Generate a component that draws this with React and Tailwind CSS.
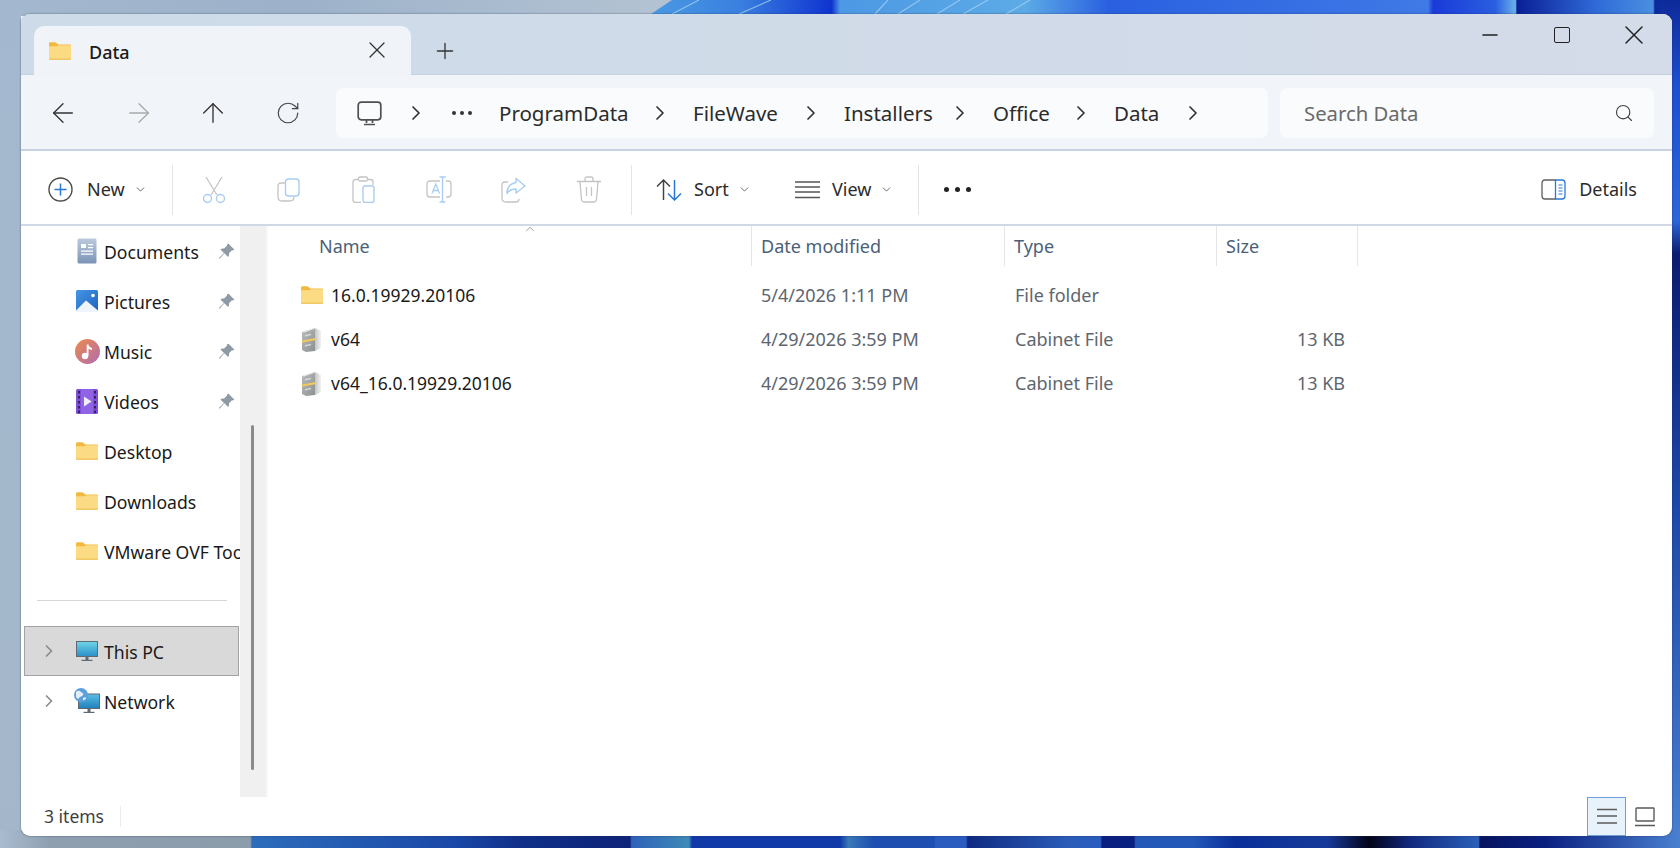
import React from 'react';
import { ArrowLeft, ArrowRight, ArrowUp, RotateCw, ChevronRight, ChevronDown, ChevronUp, Search, X, Plus, Minus } from 'lucide-react';

function Wallpaper() {
  return (
    <svg className="absolute inset-0" width="1680" height="848" viewBox="0 0 1680 848">
      <defs>
        <linearGradient id="wpTop" gradientUnits="userSpaceOnUse" x1="0" y1="0" x2="1680" y2="0">
          <stop offset="0" stopColor="#a3b8ce" />
          <stop offset="0.18" stopColor="#9db2ca" />
          <stop offset="0.385" stopColor="#b2c2d2" />
          <stop offset="0.386" stopColor="#4a9ae2" />
          <stop offset="0.44" stopColor="#3a80e0" />
          <stop offset="0.495" stopColor="#0f33d0" />
          <stop offset="0.5" stopColor="#4d98e4" />
          <stop offset="0.61" stopColor="#5cabe6" />
          <stop offset="0.66" stopColor="#2a60e0" />
          <stop offset="0.85" stopColor="#3f7ae6" />
          <stop offset="0.853" stopColor="#1a3ad8" />
          <stop offset="0.89" stopColor="#2a5ee0" />
          <stop offset="0.902" stopColor="#6ab0ea" />
          <stop offset="0.903" stopColor="#0a1f95" />
          <stop offset="0.95" stopColor="#2f6ad8" />
          <stop offset="0.984" stopColor="#4a8fe0" />
          <stop offset="0.985" stopColor="#0d2a9c" />
          <stop offset="1" stopColor="#0f2f9e" />
        </linearGradient>
        <linearGradient id="wpBottom" gradientUnits="userSpaceOnUse" x1="0" y1="0" x2="1680" y2="0">
          <stop offset="0" stopColor="#a9bccf" />
          <stop offset="0.03" stopColor="#8e9fb0" />
          <stop offset="0.149" stopColor="#8b9cab" />
          <stop offset="0.15" stopColor="#2d6cbb" />
          <stop offset="0.27" stopColor="#1a48a8" />
          <stop offset="0.31" stopColor="#0f2f88" />
          <stop offset="0.375" stopColor="#0e2378" />
          <stop offset="0.376" stopColor="#2e62b8" />
          <stop offset="0.41" stopColor="#3f8ab8" />
          <stop offset="0.412" stopColor="#103aa8" />
          <stop offset="0.5" stopColor="#0f3aa8" />
          <stop offset="0.505" stopColor="#3a78b8" />
          <stop offset="0.52" stopColor="#1e4fb0" />
          <stop offset="0.556" stopColor="#1e4fb0" />
          <stop offset="0.557" stopColor="#2a5cc0" />
          <stop offset="0.575" stopColor="#2a5cc0" />
          <stop offset="0.576" stopColor="#0f2a80" />
          <stop offset="0.635" stopColor="#2a5cb8" />
          <stop offset="0.655" stopColor="#2a5cc0" />
          <stop offset="0.656" stopColor="#0a2080" />
          <stop offset="0.675" stopColor="#0a2080" />
          <stop offset="0.676" stopColor="#2458b8" />
          <stop offset="0.71" stopColor="#2458b8" />
          <stop offset="0.735" stopColor="#0a2f99" />
          <stop offset="0.79" stopColor="#163a9a" />
          <stop offset="0.815" stopColor="#020418" />
          <stop offset="0.84" stopColor="#122a80" />
          <stop offset="0.88" stopColor="#2a60b8" />
          <stop offset="0.881" stopColor="#06135f" />
          <stop offset="0.92" stopColor="#0a2080" />
          <stop offset="1" stopColor="#4a80d0" />
        </linearGradient>
        <linearGradient id="wpRight" x1="0" y1="0" x2="0" y2="1">
          <stop offset="0" stopColor="#0e2a9a" />
          <stop offset="0.1" stopColor="#1d4fd0" />
          <stop offset="0.26" stopColor="#2d66d8" />
          <stop offset="0.3" stopColor="#0a1c70" />
          <stop offset="0.6" stopColor="#1d48a8" />
          <stop offset="1" stopColor="#4a80d0" />
        </linearGradient>
        <linearGradient id="wpLeft" x1="0" y1="0" x2="0" y2="1">
          <stop offset="0" stopColor="#a3b8ce" />
          <stop offset="1" stopColor="#a4b7ca" />
        </linearGradient>
      </defs>
      <rect x="0" y="0" width="1680" height="16" fill="url(#wpTop)" />
      <path d="M640 0h32l-24 16h-8z" fill="#b2c2d2" />
      <rect x="0" y="0" width="21" height="848" fill="url(#wpLeft)" />
      <rect x="1660" y="0" width="20" height="848" fill="url(#wpRight)" />
      <rect x="0" y="830" width="1680" height="18" fill="url(#wpBottom)" />
      <path d="M672 14L699 0M739 14L771 0M875 14L888 0M898 14L920 0M937 14L960 0M963 14L988 0M1006 14L1030 0" stroke="#9fd0f0" strokeWidth="1.2" opacity="0.8" />
    </svg>
  );
}

function FolderIcon({ className = 'w-[22px] h-[18px]' }) {
  return (
    <svg className={className} viewBox="0 0 24 19">
      <path d="M0 1.500C0 .7.6 0 1.400 0h5.200c.6 0 1 .2 1.400.6L10 2.500h12.600c.8 0 1.400.6 1.400 1.400V6H0z" fill="#f1b93f" />
      <path d="M0 4.400h9.600l1.700-1.300h11.400c.7 0 1.300.6 1.300 1.300v13.200c0 .8-.6 1.400-1.400 1.400H1.400C.6 19 0 18.400 0 17.600z" fill="#fbdc84" />
      <rect x="0" y="17.800" width="24" height="1.200" rx="0.600" fill="#f0c156" />
    </svg>
  );
}

function CabinetIcon() {
  return (
    <svg className="w-[24px] h-[25px]" viewBox="0 0 24 25">
      <defs>
        <linearGradient id="cabFront" x1="0" y1="0" x2="1" y2="1">
          <stop offset="0" stopColor="#b9bcbc" />
          <stop offset="1" stopColor="#8d9191" />
        </linearGradient>
        <linearGradient id="cabShadow" x1="0" y1="0" x2="1" y2="0">
          <stop offset="0" stopColor="#c4c6c6" />
          <stop offset="1" stopColor="#f2f2f2" />
        </linearGradient>
      </defs>
      <path d="M14 1l6 3v17l-6 3z" fill="url(#cabShadow)" />
      <path d="M1 5L14 1v23L5 25l-4-2z" fill="url(#cabFront)" />
      <path d="M1 5L14 1l.6.4L3 5.600z" fill="#ececec" />
      <path d="M1 13.500l13-2.500v2.200L1 15.700z" fill="#eec75e" />
      <path d="M4 8l6-1.300v1.600L4 9.600zM4 18l6-1.300v1.600L4 19.600z" fill="#d6d8d8" />
    </svg>
  );
}

function PinIcon() {
  return (
    <svg className="w-[17px] h-[17px]" viewBox="0 0 17 17">
      <path d="M10.500.700l5.800 5.800-1.200 1.100-1.100-.3-3 3c.3 1.400 0 2.700-.9 3.700L6.400 10.300 1.600 15.800.900 15.100 6 10.100 2.400 6.400c1-.9 2.400-1.200 3.700-.8l3-3-.2-1.100z" fill="#8e9ba6" />
    </svg>
  );
}

function DocumentsIcon() {
  return (
    <svg className="w-[20px] h-[26px]" viewBox="0 0 20 26">
      <defs>
        <linearGradient id="docGrad" x1="0" y1="0" x2="0" y2="1">
          <stop offset="0" stopColor="#bccade" />
          <stop offset="1" stopColor="#7c93b7" />
        </linearGradient>
      </defs>
      <rect x="0.500" y="0.500" width="19" height="25" rx="1.500" fill="url(#docGrad)" />
      <path d="M4 6h5v4H4zM11 6h5v1.300h-5zM11 9h5v1.300h-5zM4 12.500h12v1.300H4zM4 15.500h12v1.300H4z" fill="#fff" />
    </svg>
  );
}

function PicturesIcon() {
  return (
    <svg className="w-[22px] h-[22px]" viewBox="0 0 22 22">
      <defs>
        <linearGradient id="picGrad" x1="0" y1="0" x2="1" y2="1">
          <stop offset="0" stopColor="#4596e6" />
          <stop offset="1" stopColor="#1e62bd" />
        </linearGradient>
      </defs>
      <rect width="22" height="22" rx="1.500" fill="url(#picGrad)" />
      <circle cx="17" cy="5.500" r="1.800" fill="#fff" />
      <path d="M0 20.500L10 10.500l12 10v1.500H0z" fill="#eef5fc" />
    </svg>
  );
}

function MusicIcon() {
  return (
    <svg className="w-[25px] h-[25px]" viewBox="0 0 25 25">
      <defs>
        <linearGradient id="musGrad" x1="0" y1="0" x2="1" y2="1">
          <stop offset="0" stopColor="#ee8a4a" />
          <stop offset="1" stopColor="#b06cb2" />
        </linearGradient>
      </defs>
      <circle cx="12.500" cy="12.500" r="12.500" fill="url(#musGrad)" />
      <circle cx="10" cy="17" r="3.200" fill="#fff" />
      <path d="M11.700 17V5.500h1.800c.2 2.200 1.900 3 3.500 3.500v2c-1.400-.2-2.600-.8-3.500-1.500V17z" fill="#fff" />
    </svg>
  );
}

function VideosIcon() {
  return (
    <svg className="w-[22px] h-[25px]" viewBox="0 0 22 25">
      <rect width="22" height="25" rx="1.500" fill="#7f4fd8" />
      <rect x="5" y="0" width="12" height="25" fill="#8f62e6" />
      <path d="M2 2h2v2.500H2zM2 7h2v2.500H2zM2 12h2v2.500H2zM2 17h2v2.500H2zM2 21.500h2V24H2zM18 2h2v2.500h-2zM18 7h2v2.500h-2zM18 12h2v2.500h-2zM18 17h2v2.500h-2zM18 21.500h2V24h-2z" fill="#35215f" />
      <path d="M8 7.500l7.500 5-7.500 5z" fill="#f2eefc" />
    </svg>
  );
}

function ThisPcIcon() {
  return (
    <svg className="w-[22px] h-[21px]" viewBox="0 0 22 21">
      <defs>
        <linearGradient id="pcGrad" x1="0" y1="0" x2="0" y2="1">
          <stop offset="0" stopColor="#6fd6ea" />
          <stop offset="1" stopColor="#2a8fc6" />
        </linearGradient>
      </defs>
      <rect x="0.500" y="0.500" width="21" height="15" fill="url(#pcGrad)" stroke="#5f6b74" />
      <path d="M9.500 15.500h3V19h-3z" fill="#5f6b74" />
      <path d="M5.500 18.800h11v1.200h-11z" fill="#5f6b74" />
    </svg>
  );
}

function NetworkIcon() {
  return (
    <svg className="w-[26px] h-[26px]" viewBox="0 0 26 26">
      <defs>
        <linearGradient id="netGrad" x1="0" y1="0" x2="0" y2="1">
          <stop offset="0" stopColor="#5cbfe4" />
          <stop offset="1" stopColor="#1f7fbb" />
        </linearGradient>
      </defs>
      <rect x="4.500" y="6" width="21" height="14.500" fill="url(#netGrad)" stroke="#5f6b74" />
      <path d="M13.500 20.500h3V24h-3z" fill="#5f6b74" />
      <path d="M9.500 23.800h11V25h-11z" fill="#5f6b74" />
      <circle cx="7" cy="7" r="7" fill="#5c9fdc" />
      <path d="M2 4c2-2 4-1 5 0s3 1 2 3-3 1-4 3-3 0-3-2zM9 10c1-1 3-1 3 0s-2 3-3 2z" fill="#e4eef8" />
    </svg>
  );
}

function MonitorIcon() {
  return (
    <svg className="w-[25px] h-[25px]" viewBox="0 0 25 25" fill="none" stroke="#4b5055" strokeWidth="1.700">
      <rect x="1.200" y="1.200" width="22.600" height="17.600" rx="3" />
      <path d="M9.500 19v3M15.500 19v3M7 23.500h11" />
    </svg>
  );
}

function NewIcon() {
  return (
    <svg className="w-[25px] h-[25px]" viewBox="0 0 25 25" fill="none">
      <circle cx="12.500" cy="12.500" r="11.500" stroke="#4a4a4a" strokeWidth="1.400" />
      <path d="M12.500 6.500v12M6.500 12.500h12" stroke="#2a78d6" strokeWidth="1.500" />
    </svg>
  );
}

function CutIcon() {
  return (
    <svg className="w-[24px] h-[28px]" viewBox="0 0 24 28" fill="none">
      <path d="M4 1l11 18M20 1L9 19" stroke="#c4c4c4" strokeWidth="1.300" />
      <circle cx="5.500" cy="22.500" r="4" stroke="#a9cdf0" strokeWidth="1.400" />
      <circle cx="18.500" cy="22.500" r="4" stroke="#a9cdf0" strokeWidth="1.400" />
    </svg>
  );
}

function CopyIcon() {
  return (
    <svg className="w-[23px] h-[24px]" viewBox="0 0 23 24" fill="none">
      <path d="M8 5H4C2 5 1 6 1 8v11c0 2 1 4 4 4h8c2 0 4-1 4-4" stroke="#c4c4c4" strokeWidth="1.300" />
      <rect x="8.500" y="1" width="13.500" height="17" rx="3" stroke="#a9cdf0" strokeWidth="1.400" />
    </svg>
  );
}

function PasteIcon() {
  return (
    <svg className="w-[23px] h-[27px]" viewBox="0 0 23 27" fill="none">
      <path d="M6 3.500H3.500C2 3.500 1 4.500 1 6v18c0 1.500 1 2.500 2.500 2.500H9M16 3.500h2.500C20 3.500 21 4.500 21 6v3" stroke="#c4c4c4" strokeWidth="1.300" />
      <rect x="6.500" y="1" width="9" height="4" rx="1.500" stroke="#c4c4c4" strokeWidth="1.300" />
      <rect x="11" y="10" width="11" height="16.500" rx="2" stroke="#a9cdf0" strokeWidth="1.400" />
    </svg>
  );
}

function RenameIcon() {
  return (
    <svg className="w-[26px] h-[27px]" viewBox="0 0 26 27" fill="none">
      <path d="M14 5H4C2 5 1 6 1 8v10c0 2 1 3 3 3h10M20 5h2c2 0 3 1 3 3v10c0 2-1 3-3 3h-2" stroke="#c4c4c4" strokeWidth="1.300" />
      <path d="M13.500 1h6M16.500 1v25M13.500 26h6" stroke="#a9cdf0" strokeWidth="1.400" />
      <path d="M6 17.500l3.800-9.500 3.700 9.500M7.300 14.500h5" stroke="#a9cdf0" strokeWidth="1.300" />
    </svg>
  );
}

function ShareIcon() {
  return (
    <svg className="w-[25px] h-[26px]" viewBox="0 0 25 26" fill="none">
      <path d="M7 5H4C2 5 1 6 1 8v13c0 2 1 4 4 4h10c2 0 3-1 3-3" stroke="#c4c4c4" strokeWidth="1.300" />
      <path d="M15 1.500l9 7.500-9 7v-4c-4 0-7 1-9 4.500 0-6 3-10 9-11z" stroke="#a9cdf0" strokeWidth="1.400" strokeLinejoin="round" />
    </svg>
  );
}

function DeleteIcon() {
  return (
    <svg className="w-[24px] h-[27px]" viewBox="0 0 24 27" fill="none" stroke="#c4c4c4" strokeWidth="1.300">
      <path d="M0 5.500h24M8 5V3c0-1 1-2 2-2h4c1 0 2 1 2 2v2M3 6l1.500 17.500c.2 1.500 1 2.500 2.500 2.500h10c1.500 0 2.300-1 2.500-2.500L21 6M9.500 11v9M14.500 11v9" />
    </svg>
  );
}

function SortIcon() {
  return (
    <svg className="w-[26px] h-[22px]" viewBox="0 0 26 22" fill="none" strokeWidth="1.500">
      <path d="M1 7.500L7.500 1 14 7.500M7.500 1v20" stroke="#444" />
      <path d="M12 14.500l6.500 6.500 6.500-6.500M18.500 1v20" stroke="#2a78d6" />
    </svg>
  );
}

function LinesIcon() {
  return (
    <svg className="w-[25px] h-[18px]" viewBox="0 0 25 18" fill="none" stroke="#555" strokeWidth="1.300">
      <path d="M0 1h25M0 6h25M0 11h25M0 16.500h25" />
    </svg>
  );
}

function DetailsIcon() {
  return (
    <svg className="w-[25px] h-[21px]" viewBox="0 0 25 21" fill="none">
      <path d="M14.500 1H4C2 1 1 2 1 4v13c0 2 1 3 3 3h10.500" stroke="#5f5f5f" strokeWidth="1.300" />
      <path d="M14.500 1H21c2 0 3 1 3 3v13c0 2-1 3-3 3h-6.500z" stroke="#2a78d6" strokeWidth="1.300" />
      <path d="M17.500 6h4M17.500 9h4M17.500 12h4M17.500 15h4" stroke="#2a78d6" strokeWidth="1.100" />
    </svg>
  );
}

function Crumb({ label, className }) {
  return (
    <div className={`flex items-center h-full ${className}`}>
      <span className="flex-1 text-[#2b2b2b] text-[20.500px]">{label}</span>
      <ChevronRight className="w-[24px] h-[24px] text-[#333]" strokeWidth={1.7} />
    </div>
  );
}

function ToolButton({ children }) {
  return <div className="w-[75px] h-full flex items-center justify-center">{children}</div>;
}

function NavItem({ icon, label, pinned }) {
  return (
    <div className="h-[50px] flex items-center shrink-0 relative whitespace-nowrap">
      <div className="w-[83px] flex justify-end pr-[4px] shrink-0">
        <div className="w-[26px] flex justify-center">{icon}</div>
      </div>
      <span className="pt-[2px] text-[#1a1a1a] text-[17.600px]">{label}</span>
      {pinned && (
        <div className="absolute left-[197px] top-[17px]">
          <PinIcon />
        </div>
      )}
    </div>
  );
}

function FileRow({ icon, name, date, type, size }) {
  return (
    <div className="h-[44px] flex items-center text-[18px]">
      <div className="w-[484px] flex items-center pl-[33px]">
        <div className="w-[30px] shrink-0">{icon}</div>
        <span className="text-[#1a1a1a] text-[17.500px]">{name}</span>
      </div>
      <div className="w-[253px] pl-[9px] text-[#5d6670]">{date}</div>
      <div className="w-[212px] pl-[10px] text-[#5d6670]">{type}</div>
      <div className="w-[141px] pr-[13px] text-right text-[#5d6670]">{size}</div>
    </div>
  );
}

export default function App() {
  return (
    <div className="relative w-[1680px] h-[848px] overflow-hidden pt-[14px] pl-[21px] pr-[8px] pb-[12px] font-['Noto_Sans',sans-serif]">
      <Wallpaper />
      {/* Window */}
      <div className="relative w-full h-full flex flex-col rounded-[9px] overflow-hidden bg-white shadow-[0_0_2px_rgba(40,50,70,0.7)]">
        {/* Title bar */}
        <div className="h-[61px] shrink-0 flex pt-[12px] pl-[13px] bg-gradient-to-r from-[#cddbe8] to-[#d4dbe9] border-b border-[#c5d1df] relative">
          <div className="w-[377px] h-[49px] bg-[#f0f4f9] rounded-t-[10px] flex items-center pl-[15px] pr-[20px]">
            <FolderIcon />
            <span className="ml-[18px] mt-[3px] text-[#1b1b1b] text-[18px] font-medium">Data</span>
            <X className="ml-auto -mt-[1px] w-[28px] h-[28px] text-[#333]" strokeWidth={1.1} />
          </div>
          <Plus className="ml-[21px] mt-[12px] w-[26px] h-[26px] text-[#333]" strokeWidth={1.2} />
          {/* Window controls */}
          <div className="ml-auto flex items-start pr-[22px] -mt-[1px]">
            <Minus className="-mt-[2px] w-[24px] h-[24px] text-[#222]" strokeWidth={1.6} />
            <div className="ml-[52px] mt-[2px] w-[16px] h-[16px] border-[1.500px] border-[#222] rounded-[2px]" />
            <X className="ml-[48px] -mt-[6px] w-[32px] h-[32px] text-[#222]" strokeWidth={1.1} />
          </div>
        </div>

        {/* Address row */}
        <div className="h-[76px] shrink-0 flex items-center pt-[2px] bg-[#f1f4f9] border-b-2 border-[#c6d2e2]">
          <div className="w-[315px] shrink-0 flex items-center pl-[4px]">
            <div className="w-[76px] flex justify-center"><ArrowLeft className="w-[32px] h-[32px] text-[#333]" strokeWidth={1} /></div>
            <div className="w-[75px] flex justify-center"><ArrowRight className="w-[32px] h-[32px] text-[#a9a9a9]" strokeWidth={1} /></div>
            <div className="w-[74px] flex justify-center"><ArrowUp className="w-[32px] h-[32px] text-[#333]" strokeWidth={1} /></div>
            <div className="w-[76px] flex justify-center"><RotateCw className="w-[26px] h-[26px] text-[#444]" strokeWidth={1.1} /></div>
          </div>
          <div className="w-[932px] h-[50px] shrink-0 bg-[#fafbfd] rounded-[7px] flex items-center pl-[21px]">
            <MonitorIcon />
            <ChevronRight className="ml-[22px] w-[24px] h-[24px] text-[#333]" strokeWidth={1.7} />
            <div className="ml-[24px] w-[47px] flex gap-[4px]">
              <div className="w-[4px] h-[4px] rounded-full bg-[#333]" />
              <div className="w-[4px] h-[4px] rounded-full bg-[#333]" />
              <div className="w-[4px] h-[4px] rounded-full bg-[#333]" />
            </div>
            <Crumb label="ProgramData" className="w-[194px] pr-[21px]" />
            <Crumb label="FileWave" className="w-[151px] pr-[21px]" />
            <Crumb label="Installers" className="w-[149px] pr-[21px]" />
            <Crumb label="Office" className="w-[121px] pr-[21px]" />
            <Crumb label="Data" className="w-[91px]" />
          </div>
          <div className="ml-[12px] w-[374px] h-[50px] bg-[#fafbfd] rounded-[7px] flex items-center pl-[24px] pr-[20px]">
            <span className="text-[#6a6a6a] text-[20.300px]">Search Data</span>
            <Search className="ml-auto w-[20px] h-[20px] text-[#444]" strokeWidth={1.4} />
          </div>
        </div>

        {/* Command bar */}
        <div className="h-[75px] shrink-0 flex items-center pt-[4px] border-b-2 border-[#cfd8e4] text-[18px] text-[#2b2b2b]">
          <div className="w-[151px] shrink-0 h-full flex items-center pl-[27px]">
            <NewIcon />
            <span className="ml-[14px]">New</span>
            <ChevronDown className="ml-[9px] w-[13px] h-[13px] text-[#555]" strokeWidth={1.6} />
          </div>
          <div className="w-px h-[50px] bg-[#e4e4e4] shrink-0" />
          <div className="shrink-0 h-full flex items-center pl-[3px]">
            <ToolButton><CutIcon /></ToolButton>
            <ToolButton><CopyIcon /></ToolButton>
            <ToolButton><PasteIcon /></ToolButton>
            <ToolButton><RenameIcon /></ToolButton>
            <ToolButton><ShareIcon /></ToolButton>
            <ToolButton><DeleteIcon /></ToolButton>
          </div>
          <div className="w-px h-[50px] bg-[#e4e4e4] shrink-0 ml-[5px]" />
          <div className="w-[123px] shrink-0 h-full flex items-center pl-[24px]">
            <SortIcon />
            <span className="ml-[12px]">Sort</span>
            <ChevronDown className="ml-[9px] w-[13px] h-[13px] text-[#555]" strokeWidth={1.6} />
          </div>
          <div className="w-[163px] shrink-0 h-full flex items-center pl-[40px]">
            <LinesIcon />
            <span className="ml-[12px]">View</span>
            <ChevronDown className="ml-[9px] w-[13px] h-[13px] text-[#555]" strokeWidth={1.6} />
          </div>
          <div className="w-px h-[50px] bg-[#e4e4e4] shrink-0" />
          <div className="ml-[25px] flex gap-[6px]">
            <div className="w-[5px] h-[5px] rounded-full bg-[#222]" />
            <div className="w-[5px] h-[5px] rounded-full bg-[#222]" />
            <div className="w-[5px] h-[5px] rounded-full bg-[#222]" />
          </div>
          <div className="ml-auto flex items-center pr-[35px]">
            <DetailsIcon />
            <span className="ml-[13px]">Details</span>
          </div>
        </div>

        {/* Body */}
        <div className="flex-1 flex min-h-0">
          {/* Navigation pane */}
          <div className="w-[219px] shrink-0 overflow-hidden flex flex-col">
            <div className="flex flex-col">
              <NavItem icon={<DocumentsIcon />} label="Documents" pinned />
              <NavItem icon={<PicturesIcon />} label="Pictures" pinned />
              <NavItem icon={<MusicIcon />} label="Music" pinned />
              <NavItem icon={<VideosIcon />} label="Videos" pinned />
              <NavItem icon={<FolderIcon />} label="Desktop" />
              <NavItem icon={<FolderIcon />} label="Downloads" />
              <NavItem icon={<FolderIcon />} label="VMware OVF Tools" />
            </div>
            <div className="mt-[24px] ml-[16px] w-[190px] h-px bg-[#d6d6d6] shrink-0" />
            <div className="mt-[25px] ml-[3px] w-[215px] h-[50px] shrink-0 bg-[#d9d9d9] border border-[#a3a3a3] flex items-center whitespace-nowrap">
              <ChevronRight className="ml-[14px] w-[20px] h-[20px] text-[#8a8a8a]" strokeWidth={2} />
              <div className="ml-[15px] w-[26px] flex justify-center"><ThisPcIcon /></div>
              <span className="ml-[4px] pt-[2px] text-[#1a1a1a] text-[17.600px]">This PC</span>
            </div>
            <div className="ml-[3px] h-[50px] shrink-0 flex items-center whitespace-nowrap">
              <ChevronRight className="ml-[15px] w-[20px] h-[20px] text-[#8a8a8a]" strokeWidth={2} />
              <div className="ml-[15px] w-[26px] flex justify-center"><NetworkIcon /></div>
              <span className="ml-[4px] pt-[2px] text-[#1a1a1a] text-[17.600px]">Network</span>
            </div>
          </div>
          {/* Navigation scrollbar */}
          <div className="w-[26px] shrink-0 bg-[#f0f0f0] pl-[11px] pt-[199px] pb-[27px]">
            <div className="w-[3px] h-full rounded-full bg-[#8a8a8a]" />
          </div>
          <div className="w-[2px] shrink-0 bg-[#f7f7f7]" />

          {/* File list */}
          <div className="flex-1 min-w-0 relative">
            <ChevronUp className="absolute left-[255px] -top-[4px] w-[14px] h-[14px] text-[#777]" strokeWidth={1.2} />
            <div className="h-[40px] flex text-[18px] leading-[41px] text-[#4c5f78]">
              <div className="w-[484px] pl-[51px] border-r border-[#e5e5e5]">Name</div>
              <div className="w-[253px] pl-[9px] border-r border-[#e5e5e5]">Date modified</div>
              <div className="w-[212px] pl-[9px] border-r border-[#e5e5e5]">Type</div>
              <div className="w-[141px] pl-[9px] border-r border-[#e5e5e5]">Size</div>
            </div>
            <div className="mt-[7px]">
              <FileRow icon={<FolderIcon />} name="16.0.19929.20106" date="5/4/2026 1:11 PM" type="File folder" />
              <FileRow icon={<CabinetIcon />} name="v64" date="4/29/2026 3:59 PM" type="Cabinet File" size="13 KB" />
              <FileRow icon={<CabinetIcon />} name="v64_16.0.19929.20106" date="4/29/2026 3:59 PM" type="Cabinet File" size="13 KB" />
            </div>
          </div>
        </div>

        {/* Status bar */}
        <div className="h-[39px] shrink-0 flex items-center pl-[23px] text-[17.500px] text-[#3f3f3f]">
          <span className="w-[76px]">3 items</span>
          <div className="w-px h-[21px] bg-[#ececec]" />
          <div className="ml-auto flex h-full">
            <div className="w-[39px] h-full bg-[#e8f2fa] border border-[#6f9fd8] flex items-center justify-center">
              <svg className="w-[20px] h-[17px]" viewBox="0 0 20 17" fill="none" stroke="#5a5a5a" strokeWidth="1.500">
                <path d="M0 1.500h20M0 8h20M0 15h20" />
              </svg>
            </div>
            <div className="w-[46px] h-full flex items-center pl-[9px]">
              <svg className="w-[20px] h-[20px]" viewBox="0 0 20 20" fill="none" stroke="#5a5a5a" strokeWidth="1.400">
                <rect x="1" y="1" width="18" height="13" rx="0.500" />
                <path d="M0 18.500h20" />
              </svg>
            </div>
          </div>
        </div>
      </div>
    </div>
  );
}
